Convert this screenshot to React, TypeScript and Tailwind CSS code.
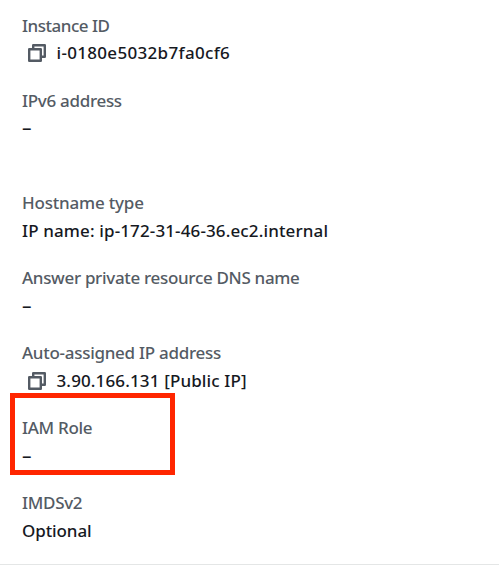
import React from "react";

function CopyIcon() {
  return (
    <svg className="mr-[10.5px] ml-1.5 h-[18px] w-[18px] shrink-0" viewBox="0 0 18 18" fill="none" stroke="#545b64" strokeWidth="2.4" strokeLinejoin="round">
      <path d="M1.2 5.2h11.6v11.6H1.2z" />
      <path d="M5.2 5.2v-4h11.6v11.6h-4" />
    </svg>
  );
}

type FieldProps = {
  label: string;
  value: string;
  copy?: boolean;
  className?: string;
  labelClass: string;
  valueClass?: string;
};

function Field({ label, value, copy, className = "h-[75px]", labelClass, valueClass = "text-[19px] font-normal" }: FieldProps) {
  return (
    <div className={className}>
      <dt className="flex h-7 items-center text-[#545b64]">
        <span className={labelClass}>{label}</span>
      </dt>
      <dd className="flex h-7 items-center text-[#16191f]">
        {copy && <CopyIcon />}
        <span className={valueClass}>{value}</span>
      </dd>
    </div>
  );
}

export default function App() {
  return (
    <main className="relative h-[566px] w-[499px] overflow-hidden bg-white font-['Noto_Sans','Open_Sans',sans-serif] text-[17px] font-medium whitespace-nowrap">
      <dl className="h-[565px] border-b border-[#e4e6e6] px-[22px] pt-3">
        <Field label="Instance ID" value="i-0180e5032b7fa0cf6" copy className="h-[75px] [&>dd]:-mt-px" labelClass="tracking-[-0.48px]" valueClass="tracking-[0.32px]" />
        <Field label="IPv6 address" value="–" className="h-[102px] [&>dd]:-mt-px" labelClass="tracking-[-0.3px]" />
        <Field label="Hostname type" value="IP name: ip-172-31-46-36.ec2.internal" labelClass="tracking-[-0.2px]" valueClass="tracking-[0.13px]" />
        <Field label="Answer private resource DNS name" value="–" labelClass="tracking-[-0.32px]" />
        <Field label="Auto-assigned IP address" value="3.90.166.131 [Public IP]" copy labelClass="tracking-[-0.28px]" valueClass="tracking-[0.14px]" />
        <Field label="IAM Role" value="–" labelClass="tracking-[-0.3px]" />
        <Field label="IMDSv2" value="Optional" labelClass="tracking-[-0.3px]" valueClass="tracking-[-0.1px]" />
      </dl>
      <div className="absolute top-[393px] left-[10px] h-[82px] w-[165px] border-[5px] border-[#ff2600]" />
    </main>
  );
}
